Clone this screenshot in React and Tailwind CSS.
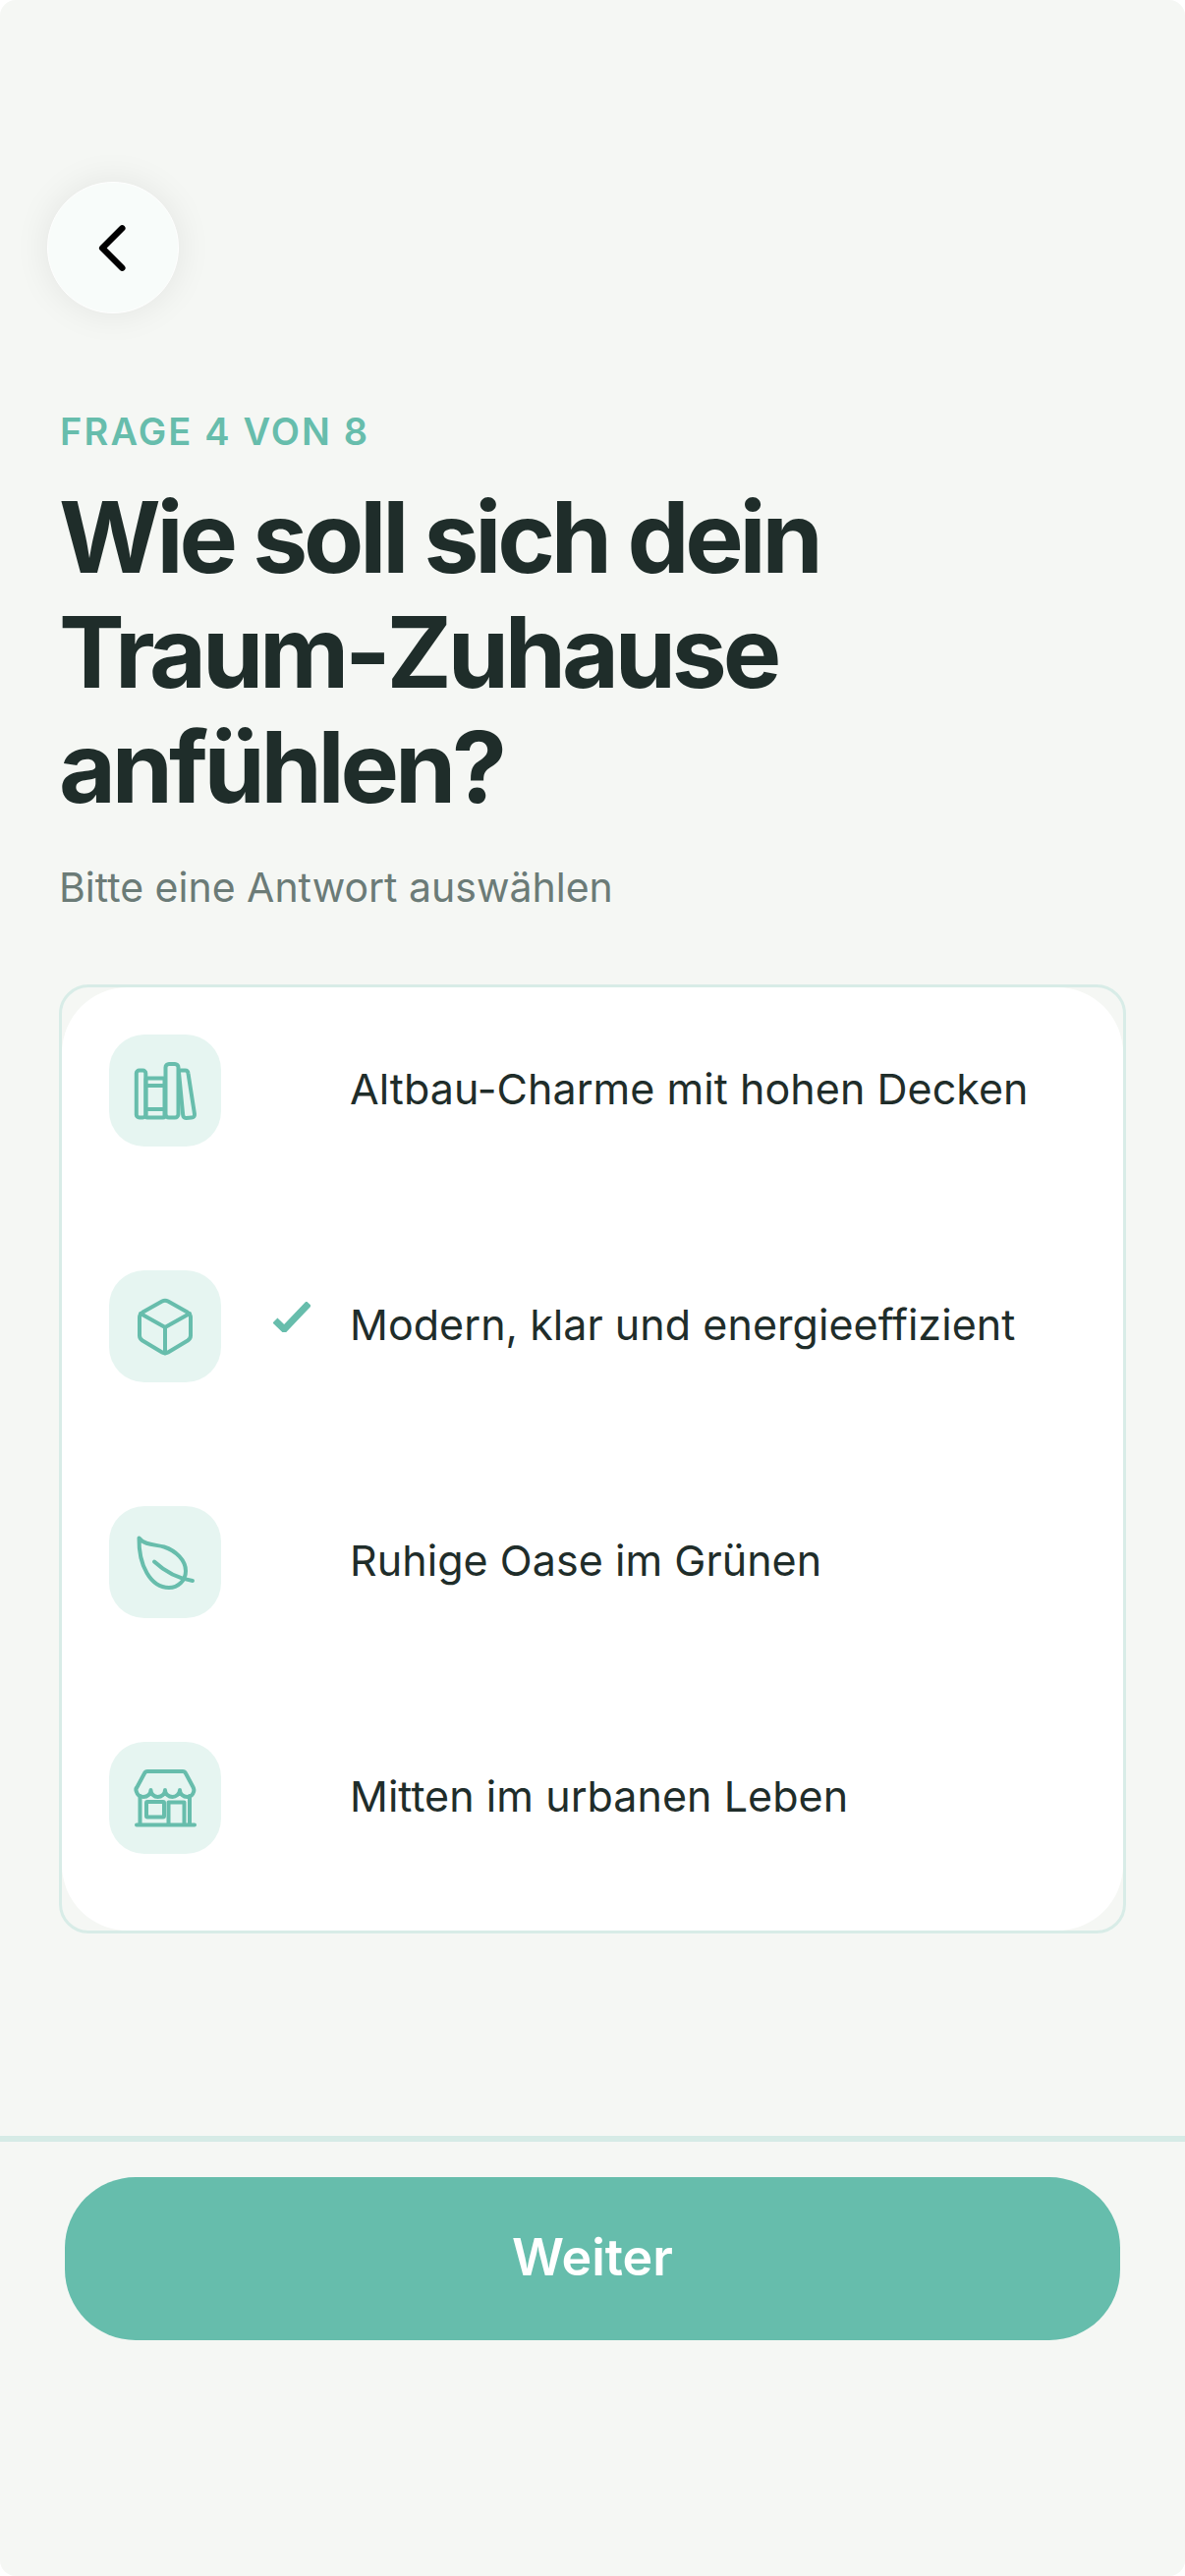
import React from "react";

const F = { fontFamily: "Inter, 'Liberation Sans', sans-serif" };

function Books() {
  return (
    <svg viewBox="0 0 114 114" className="w-[114px] h-[114px]" fill="none" stroke="#67bdac" strokeWidth="4" strokeLinejoin="round" strokeLinecap="round">
      <rect x="27.8" y="36.5" width="9.5" height="48" rx="3" />
      <rect x="37.5" y="44.5" width="19" height="40" rx="1.5" />
      <path d="M38 52h18M38 76h18" />
      <rect x="57.5" y="30" width="13" height="54.5" rx="3.5" />
      <path d="M73 36.5h4.5q2.7 0 3 3L87 81q.3 3.2-3 3.4l-5.5.5q-3 .2-3.3-3L71 38.5q-.2-2 2-2z" />
    </svg>
  );
}
function Cube() {
  return (
    <svg viewBox="0 0 114 114" className="w-[114px] h-[114px]" fill="none" stroke="#67bdac" strokeWidth="4" strokeLinejoin="round" strokeLinecap="round">
      <path d="M54 31.5Q57 29.8 60 31.5L80 42.8Q83 44.8 83 47.8V66.5Q83 69.5 80 71.5L60 83.5Q57 85.2 54 83.5L34 71.5Q31 69.5 31 66.5V47.8Q31 44.8 34 42.8Z" />
      <path d="M32 44L57 58L82 44M57 58V84.5" />
    </svg>
  );
}
function Leaf() {
  return (
    <svg viewBox="0 0 114 114" className="w-[114px] h-[114px]" fill="none" stroke="#67bdac" strokeWidth="4" strokeLinejoin="round" strokeLinecap="round">
      <path d="M30.5 32.5C36 40 48 39 56 41.5C68 45.5 78 55 78 66C78 76 70 83 61 83C42 83 30 60 30.5 32.5Z" />
      <path d="M46 56.5C54 64 66 73 85 76" />
    </svg>
  );
}
function Store() {
  return (
    <svg viewBox="0 0 114 114" className="w-[114px] h-[114px]" fill="none" stroke="#67bdac" strokeWidth="4" strokeLinejoin="round" strokeLinecap="round">
      <path d="M39 30H75Q77 30 78 32L85.5 46Q87 49 86 51C85 54.5 82 56 79.5 56C75.5 56 72 53 72 49C72 53 68 56 64.5 56C60.5 56 57 53 57 49C57 53 53.5 56 49.5 56C46 56 42.5 53 42.5 49C42.5 53 39 56 35 56C32 56 29 54.5 28 51C27 49 27.5 47 28.5 46L36 32Q37 30 39 30Z" />
      <path d="M31.5 55V84M82 55V84M28 84.5H87" />
      <rect x="38" y="61" width="18" height="15.5" rx="1" />
      <path d="M60.5 84V61.5H76.5V84" />
    </svg>
  );
}

const rows = [
  { icon: <Books />, text: "Altbau-Charme mit hohen Decken" },
  { icon: <Cube />, text: "Modern, klar und energieeffizient", checked: true },
  { icon: <Leaf />, text: "Ruhige Oase im Grünen" },
  { icon: <Store />, text: "Mitten im urbanen Leben" },
];

export default function App() {
  return (
    <div className="w-[1206px] h-[2622px] bg-white overflow-hidden" style={F}>
      <div className="w-[1206px] h-[2622px] rounded-[16px] bg-[#f5f7f4] pt-[185px]">
        <button className="ml-[48px] w-[134px] h-[134px] rounded-full bg-[#f8fcfa] border border-white shadow-[0_0_36px_rgba(0,0,0,0.08)] flex items-center justify-center">
          <svg width="134" height="134" viewBox="0 0 134 134" fill="none" stroke="#000" strokeWidth="6.5" strokeLinecap="round" strokeLinejoin="round">
            <path d="M76.5 47L56 67.5L76.5 88" />
          </svg>
        </button>

        <div className="ml-[61px] mt-[98px] text-[38px] leading-[44px] font-semibold tracking-[2.15px] text-[#67bdac]">FRAGE 4 VON 8</div>
        <h1 className="ml-[60px] mt-[27px] text-[100px] leading-[117px] font-bold tracking-[-0.042em] text-[#1f2d2a]">
          Wie soll sich dein
          <br />
          Traum-Zuhause
          <br />
          anfühlen?
        </h1>
        <div className="ml-[60px] mt-[39px] text-[41px] leading-[50px] text-[#6b7b77]">Bitte eine Antwort auswählen</div>

        <div className="mx-[60px] mt-[74px] h-[966px] rounded-[30px] border-[3px] border-[#d8ece7]">
          <div className="h-[960px] rounded-[67px] bg-white px-[48px] pt-[48px]">
            {rows.map((r) => (
              <div key={r.text} className="flex items-start h-[240px]">
                <div className="w-[114px] h-[114px] rounded-[36px] bg-[#e6f5f1] flex items-center justify-center shrink-0">{r.icon}</div>
                <div className="ml-[53px] w-[38px] h-[114px] flex items-center justify-center shrink-0">
                  {r.checked && (
                    <svg width="38" height="31" viewBox="0 0 38 31" fill="none" stroke="#67bdac" strokeWidth="7" className="mb-[19px]">
                      <path d="M2 19L11.3 28L36.3 1.7" />
                    </svg>
                  )}
                </div>
                <div className="ml-[40px] h-[111px] flex items-center text-[43px] tracking-[0.05px] text-[#1f2d2a] whitespace-nowrap">{r.text}</div>
              </div>
            ))}
          </div>
        </div>

        <div className="mt-[206px] h-[6px] bg-[#d6ebe6]" />
        <button className="block mx-[66px] mt-[36px] w-[1074px] h-[166px] rounded-[72px] bg-[#66bdac] text-white text-[52px] font-semibold pb-[2px]">Weiter</button>
      </div>
    </div>
  );
}
